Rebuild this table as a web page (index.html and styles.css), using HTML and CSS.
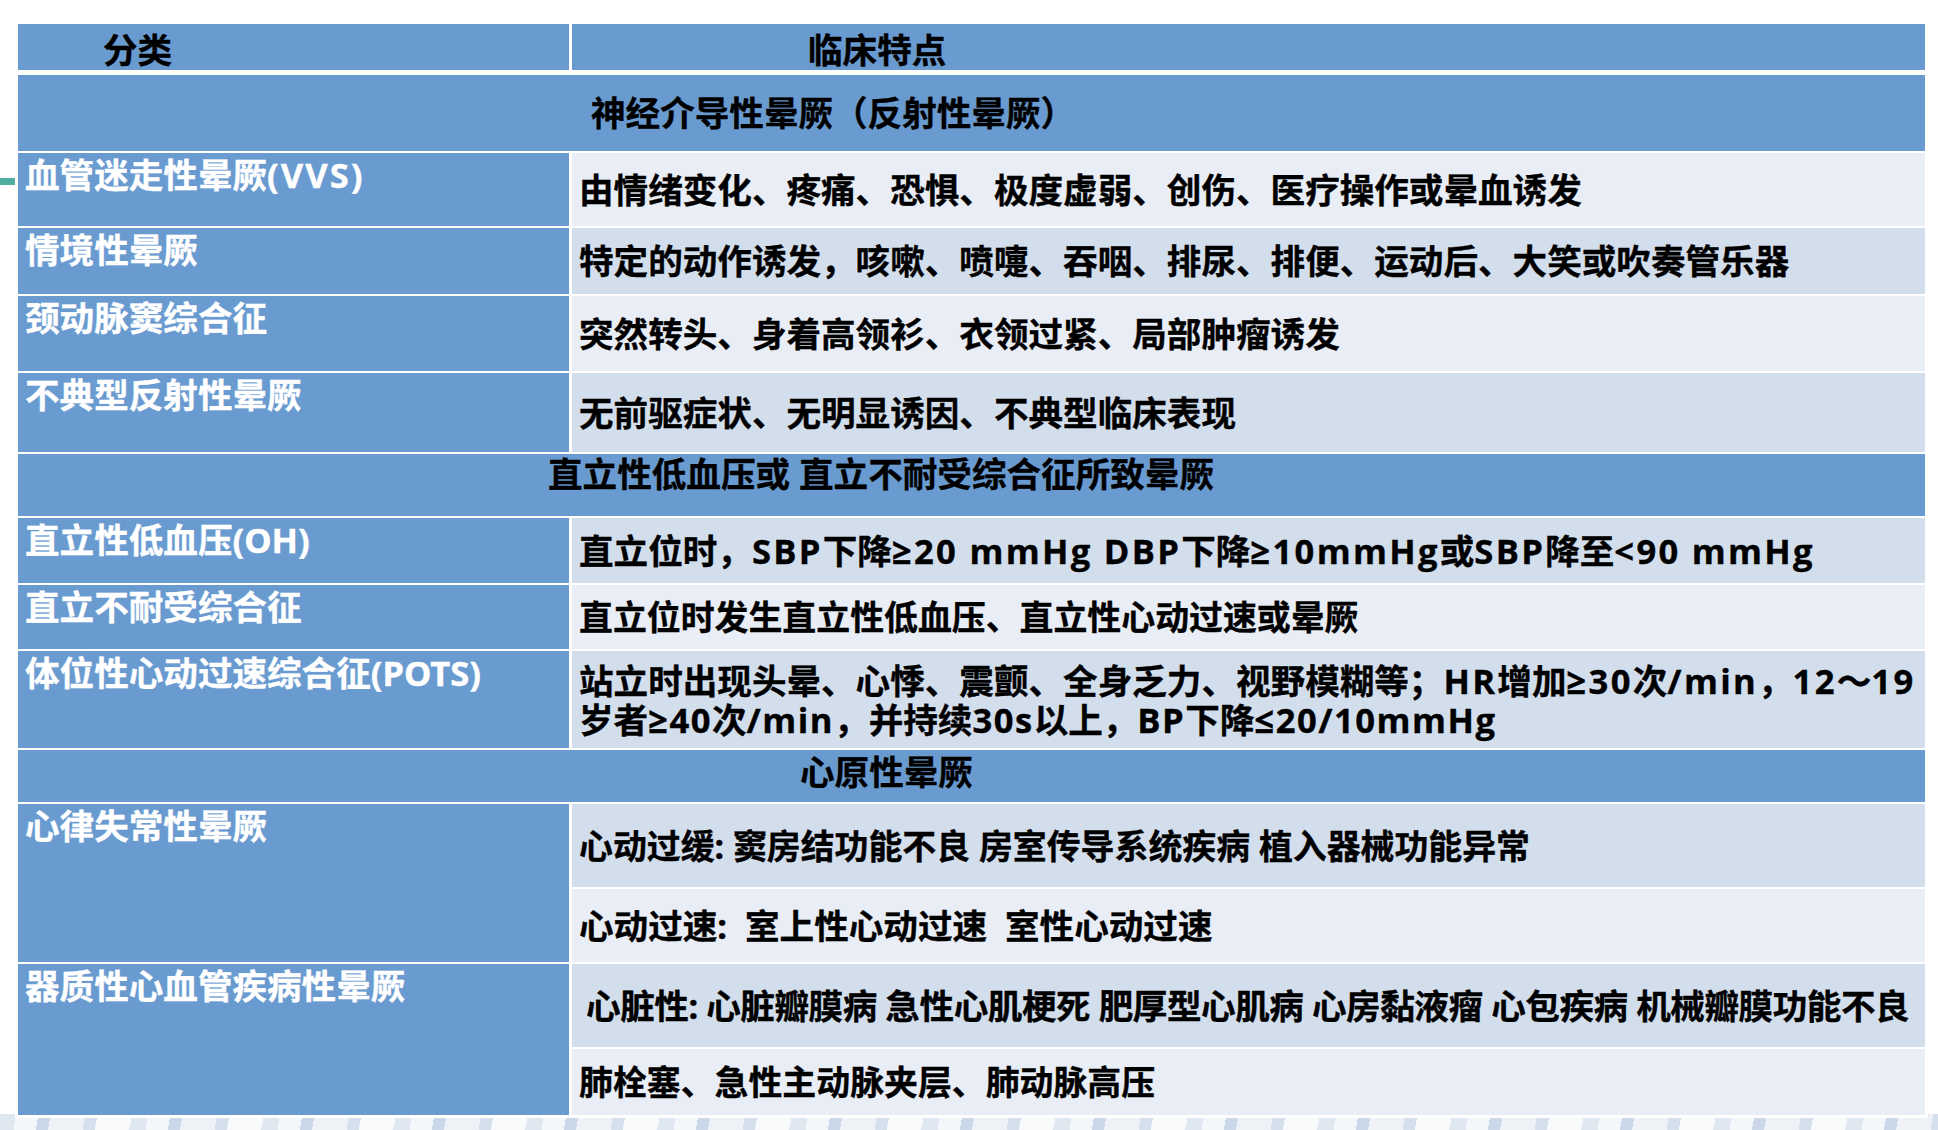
FILE: index.html
```html
<!DOCTYPE html>
<html lang="zh-CN">
<head>
<meta charset="utf-8">
<title>晕厥分类</title>
<link rel="stylesheet" href="styles.css">
</head>
<body>
<div class="page">
  <div class="accent"></div>
  <div class="table">
    <div class="head">
      <div class="hcell hcell-left">分类</div>
      <div class="hcell hcell-right">临床特点</div>
    </div>
    <div class="grid">
      <div class="sec sec-a">神经介导性晕厥（反射性晕厥）</div>

      <div class="lc">血管迷走性晕厥<span class="wide">(VVS)</span></div>
      <div class="rc light">由情绪变化、疼痛、恐惧、极度虚弱、创伤、医疗操作或晕血诱发</div>

      <div class="lc">情境性晕厥</div>
      <div class="rc dark">特定的动作诱发，咳嗽、喷嚏、吞咽、排尿、排便、运动后、大笑或吹奏管乐器</div>

      <div class="lc">颈动脉窦综合征</div>
      <div class="rc light">突然转头、身着高领衫、衣领过紧、局部肿瘤诱发</div>

      <div class="lc">不典型反射性晕厥</div>
      <div class="rc dark">无前驱症状、无明显诱因、不典型临床表现</div>

      <div class="sec sec-b">直立性低血压或 直立不耐受综合征所致晕厥</div>

      <div class="lc">直立性低血压(OH)</div>
      <div class="rc dark">直立位时，<span class="en">SBP</span>下降<span class="en">≥20 mmHg DBP</span>下降<span class="en">≥10mmHg</span>或<span class="en">SBP</span>降至<span class="en">&lt;90 mmHg</span></div>

      <div class="lc">直立不耐受综合征</div>
      <div class="rc light sm">直立位时发生直立性低血压、直立性心动过速或晕厥</div>

      <div class="lc">体位性心动过速综合征(POTS)</div>
      <div class="rc dark two">
        <div class="ln">站立时出现头晕、心悸、震颤、全身乏力、视野模糊等；<span class="en">HR</span>增加<span class="en">≥30</span>次<span class="en">/min</span>，<span class="en">12</span>～<span class="en">19</span></div>
        <div class="ln ln2">岁者<span class="en">≥40</span>次<span class="en">/min</span>，并持续<span class="en">30s</span>以上，<span class="en">BP</span>下降<span class="en">≤20/10mmHg</span></div>
      </div>

      <div class="sec sec-c">心原性晕厥</div>

      <div class="lc span2">心律失常性晕厥</div>
      <div class="rc dark sm">心动过缓: 窦房结功能不良 房室传导系统疾病 植入器械功能异常</div>
      <div class="rc light">心动过速:&nbsp; 室上性心动过速&nbsp; 室性心动过速</div>

      <div class="lc span2">器质性心血管疾病性晕厥</div>
      <div class="rc dark indent">心脏性: 心脏瓣膜病 急性心肌梗死 肥厚型心肌病 心房黏液瘤 心包疾病 机械瓣膜功能不良</div>
      <div class="rc light sm">肺栓塞、急性主动脉夹层、肺动脉高压</div>
    </div>
  </div>
</div>
</body>
</html>
```

FILE: styles.css
```css
html, body {
  margin: 0;
  padding: 0;
  background: #ffffff;
}

.page {
  position: relative;
  width: 1938px;
  height: 1130px;
  overflow: hidden;
  font-family: "Noto Sans", "Noto Sans CJK SC", sans-serif;
  font-weight: 700;
  font-size: 34.6px;
  color: #000000;
  -webkit-text-stroke: 0.35px currentColor;
  background-color: #ffffff;
  background-image: repeating-linear-gradient(100deg,
      #dfe7f1 0 16px, #f4f7fa 16px 38px, #c9d7e8 38px 50px,
      #eef2f7 50px 84px, #d6e0ec 84px 96px, #f7f9fb 96px 130px);
  background-size: 100% 16px;
  background-position: 0 100%;
  background-repeat: no-repeat;
  box-sizing: border-box;
  padding-top: 24px;
}

.accent {
  position: absolute;
  left: 0;
  top: 178px;
  width: 15px;
  height: 7px;
  background: #4fae9f;
}

.table {
  margin-left: 18px;
  width: 1907px;
  background: #ffffff;
  box-shadow: 0 0 0 3px #ffffff;
}

.head {
  display: grid;
  grid-template-columns: 551px 1353px;
  column-gap: 3px;
  height: 45px;
  margin-bottom: 6px;
}

.hcell {
  background: #6a9bd0;
  line-height: 40px;
  padding-top: 6px;
  box-sizing: border-box;
  white-space: nowrap;
}

.hcell-left {
  padding-left: 85px;
}

.hcell-right {
  padding-left: 236px;
}

.grid {
  display: grid;
  grid-template-columns: 551px 1353px;
  grid-template-rows: 76px 73px 66px 75px 79px 62px 65px 64px 97px 52px 83px 73px 83px 66px;
  column-gap: 3px;
  row-gap: 2px;
}

.sec {
  grid-column: 1 / -1;
  background: #6a9bd0;
  white-space: nowrap;
  line-height: 40px;
  box-sizing: border-box;
}

.sec-a {
  display: flex;
  align-items: center;
  padding-left: 573px;
}

.sec-b {
  padding-left: 530px;
  padding-top: 0;
}

.sec-c {
  padding-left: 782px;
  padding-top: 2px;
}

.lc {
  background: #6a9bd0;
  color: #ffffff;
  line-height: 40px;
  padding: 2px 0 0 7px;
  box-sizing: border-box;
  white-space: nowrap;
}

.wide {
  letter-spacing: 2px;
}

.span2 {
  grid-row: span 2;
}

.rc {
  display: flex;
  align-items: center;
  padding-left: 7px;
  line-height: 40px;
  white-space: nowrap;
  box-sizing: border-box;
}

.rc.sm {
  font-size: 33.9px;
}

.rc.two {
  flex-direction: column;
  align-items: flex-start;
  justify-content: center;
}

.ln {
  height: 39px;
  line-height: 39px;
}

.en {
  font-family: "Open Sans", "DejaVu Sans", sans-serif;
  letter-spacing: 2.3px;
}

.ln2 .en {
  letter-spacing: 1.5px;
}

.rc.indent {
  padding-left: 14px;
  letter-spacing: -0.45px;
}

.light {
  background: #e9edf5;
}

.dark {
  background: #d3deed;
}
```
